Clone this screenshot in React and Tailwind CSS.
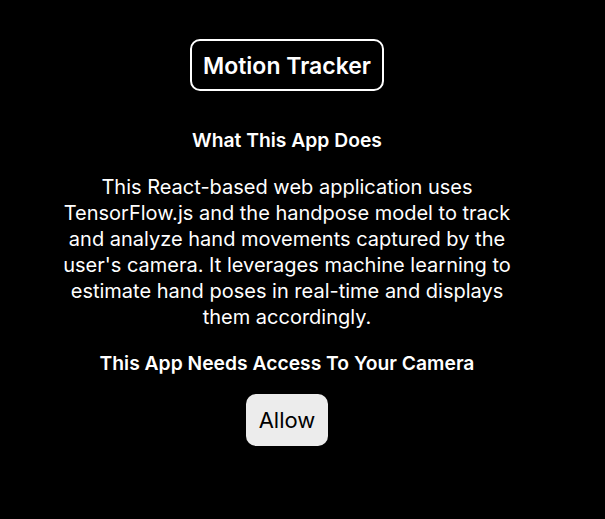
import React from 'react';

const App = () => {
  return (
    <div className="min-h-screen w-full bg-black text-white" style={{ fontFamily: 'Inter, "Noto Sans", sans-serif' }}>
      <div className="w-[574px] flex flex-col items-center pt-[39px]">
        <div className="h-[52px] px-[11px] pt-[3px] flex items-center border-2 border-white rounded-[10px]">
          <h1 className="text-[23px] font-semibold leading-none">Motion Tracker</h1>
        </div>

        <h2 className="mt-[38px] text-[19.3px] leading-[22px] font-semibold">What This App Does</h2>

        <p className="mt-[23px] w-[460px] text-center text-[20px] leading-[26px]">
          This React-based web application uses TensorFlow.js and the handpose model to track and analyze hand movements captured by the user's camera. It leverages machine learning to estimate hand poses in real-time and displays them accordingly.
        </p>

        <h2 className="mt-[22px] text-[19.3px] leading-[22px] font-semibold">This App Needs Access To Your Camera</h2>

        <button className="mt-[20px] w-[82px] h-[52px] rounded-[10px] bg-[#ececec] text-black text-[22px]">
          Allow
        </button>
      </div>
    </div>
  );
};

export default App;
